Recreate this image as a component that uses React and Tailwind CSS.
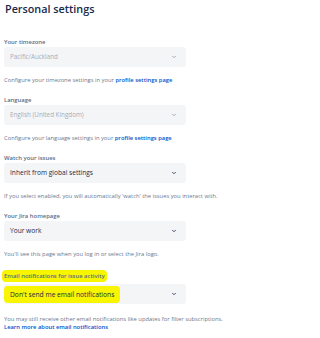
import React from "react";

const Chevron = ({ muted }) => (
  <svg width="6" height="6" viewBox="0 0 24 24" className={muted ? "text-[#a5adba]" : "text-[#42526e]"}>
    <path d="M6 9l6 6 6-6" fill="none" stroke="currentColor" strokeWidth="4" strokeLinecap="round" strokeLinejoin="round" />
  </svg>
);

const Select = ({ value, disabled, highlight }) => (
  <div className="flex h-[20px] w-[182px] items-center justify-between rounded-[3px] bg-[#f4f5f7] pl-[6px] pr-[9px]">
    {highlight ? (
      <span className="-ml-[6px] rounded-[4px] bg-[#f8f500] px-[6px] text-[6.7px] leading-[17px] text-[#172b4d]">
        {value}
      </span>
    ) : (
      <span className={`leading-[10px] ${disabled ? "text-[6.3px] text-[#a5adba]" : "text-[6.6px] text-[#172b4d]"}`}>
        {value}
      </span>
    )}
    <Chevron muted={disabled} />
  </div>
);

const Field = ({ label, value, disabled, highlight, children }) => (
  <div className="mb-[12px]">
    {highlight ? (
      <div className="-ml-[2px] mb-[2px] w-fit rounded-[4px] bg-[#f8f500] px-[2px] text-[5.9px] font-semibold leading-[12px] text-[#5e6c84]">
        {label}
      </div>
    ) : (
      <div className="mb-[1px] text-[5.9px] font-semibold leading-[8px] text-[#5e6c84]">{label}</div>
    )}
    <Select value={value} disabled={disabled} highlight={highlight} />
    <div className={`${highlight ? "mt-[11px]" : "mt-[9px]"} text-[5.8px] leading-[8px] text-[#6b778c]`}>{children}</div>
  </div>
);

const ProfileLink = () => (
  <span className="font-semibold text-[#0052cc]">profile settings page</span>
);

export default function App() {
  return (
    <div className="min-h-[338px] bg-white px-[4px] pt-[2px] font-['Open_Sans',sans-serif]">
      <h1 className="ml-[1px] mb-[22px] text-[10.8px] font-semibold leading-[14px] text-[#172b4d]">
        Personal settings
      </h1>
      <Field label="Your timezone" value="Pacific/Auckland" disabled>
        Configure your timezone settings in your <ProfileLink />
      </Field>
      <Field label="Language" value="English (United Kingdom)" disabled>
        Configure your language settings in your <ProfileLink />
      </Field>
      <Field label="Watch your issues" value="Inherit from global settings">
        If you select enabled, you will automatically 'watch' the issues you interact with.
      </Field>
      <Field label="Your Jira homepage" value="Your work">
        You'll see this page when you log in or select the Jira logo.
      </Field>
      <Field label="Email notifications for issue activity" value="Don't send me email notifications" highlight>
        You may still receive other email notifications like updates for filter subscriptions.
        <div className="font-semibold text-[#0052cc]">Learn more about email notifications</div>
      </Field>
    </div>
  );
}
